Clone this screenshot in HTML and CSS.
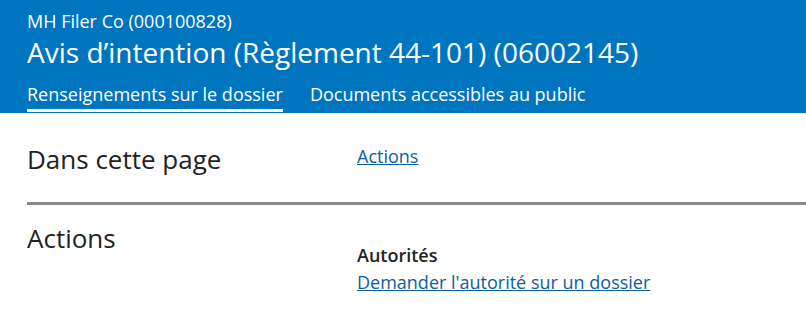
FILE: index.html
```html
<!DOCTYPE html>
<html>

<head>
    <title>Avis d'intention</title>
    <meta charset="utf-8">
    <link rel="stylesheet" href="styles.css">
</head>

<body>
    <div class="banner">
        <div class="filer">MH Filer Co (000100828)</div>
        <h1>Avis d’intention (Règlement 44-101) (06002145)</h1>
        <div class="tabs">
            <a class="tab active" href="#">Renseignements sur le dossier</a>
            <a class="tab" href="#">Documents accessibles au public</a>
        </div>
    </div>
    <div class="section toc">
        <h2>Dans cette page</h2>
        <div class="links">
            <a href="#actions">Actions</a>
        </div>
    </div>
    <div class="section" id="actions">
        <h2>Actions</h2>
        <div class="links group">
            <div class="label">Autorités</div>
            <a href="#">Demander l'autorité sur un dossier</a>
        </div>
    </div>
</body>

</html>
```

FILE: styles.css
```css
body {
    margin: 0;
    font-family: 'Open Sans', sans-serif;
    color: #222;
    background: #fff;
}

.banner {
    background: #0075bf;
    color: #fff;
    padding: 9px 0 1px 27px;
}

.filer {
    font-size: 18px;
    line-height: 24px;
}

.banner h1 {
    font-size: 28px;
    font-weight: normal;
    line-height: 36px;
    margin: 1px 0 0 0;
}

.tabs {
    display: flex;
    gap: 27px;
    margin-top: 12px;
}

.tab {
    color: #fff;
    text-decoration: none;
    font-size: 18px;
    line-height: 24px;
    padding-bottom: 3px;
    border-bottom: 3px solid transparent;
}

.tab.active {
    border-bottom-color: #fff;
}

.section {
    display: grid;
    grid-template-columns: 330px 1fr;
    margin-left: 27px;
}

.toc {
    padding: 28px 0 25px 0;
    border-bottom: 3px solid #898989;
}

.section h2 {
    font-size: 26px;
    font-weight: normal;
    line-height: 36px;
    margin: 0;
}

#actions {
    padding-top: 15px;
}

.links {
    font-size: 18px;
    line-height: 27px;
}

.toc .links {
    margin-top: 2px;
}

.links a {
    color: #0b5f9e;
}

.group {
    padding-top: 22px;
}

.label {
    font-weight: 600;
}
```
